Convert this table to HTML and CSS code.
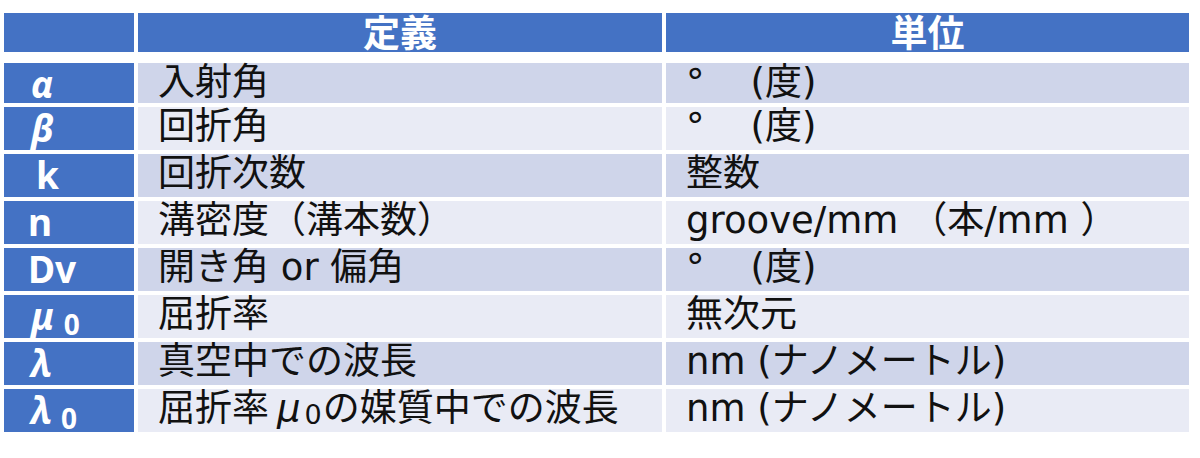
FILE: index.html
```html
<!DOCTYPE html>
<html lang="ja">
<head>
<meta charset="utf-8">
<link rel="stylesheet" href="styles.css">
</head>
<body>
<div class="table">
  <div class="head">
    <div class="hcell"></div>
    <div class="hcell">定義</div>
    <div class="hcell">単位</div>
  </div>
  <div class="rows">
    <div class="row odd">
      <div class="sym"><i>α</i></div>
      <div class="cell">入射角</div>
      <div class="cell">°<span class="deg-gap"></span>(度)</div>
    </div>
    <div class="row even">
      <div class="sym"><i>β</i></div>
      <div class="cell">回折角</div>
      <div class="cell">°<span class="deg-gap"></span>(度)</div>
    </div>
    <div class="row odd">
      <div class="sym sym-k">k</div>
      <div class="cell">回折次数</div>
      <div class="cell">整数</div>
    </div>
    <div class="row even">
      <div class="sym">n</div>
      <div class="cell">溝密度（溝本数）</div>
      <div class="cell">groove/mm （本/mm ）</div>
    </div>
    <div class="row odd">
      <div class="sym">Dv</div>
      <div class="cell">開き角 or 偏角</div>
      <div class="cell">°<span class="deg-gap"></span>(度)</div>
    </div>
    <div class="row even">
      <div class="sym"><i>μ</i><span class="symsub">0</span></div>
      <div class="cell">屈折率</div>
      <div class="cell">無次元</div>
    </div>
    <div class="row odd">
      <div class="sym"><i>λ</i></div>
      <div class="cell">真空中での波長</div>
      <div class="cell">nm (ナノメートル)</div>
    </div>
    <div class="row even">
      <div class="sym"><i>λ</i><span class="symsub">0</span></div>
      <div class="cell">屈折率<i class="mu">μ</i><span class="sub">0</span>の媒質中での波長</div>
      <div class="cell">nm (ナノメートル)</div>
    </div>
  </div>
</div>
</body>
</html>
```

FILE: styles.css
```css
html, body {
  margin: 0;
  padding: 0;
  background: #ffffff;
}

body {
  width: 1200px;
  height: 458px;
  overflow: hidden;
  font-family: "DejaVu Sans", "Noto Sans CJK JP", sans-serif;
  color: #111111;
}

.table {
  padding: 13px 0 0 4px;
}

.head,
.row {
  display: grid;
  grid-template-columns: 130px 524px 523px;
  column-gap: 4px;
}

.head {
  height: 39px;
  margin-bottom: 11px;
}

.hcell {
  background: #4472c4;
  color: #ffffff;
  font-family: "Noto Sans CJK JP", sans-serif;
  font-size: 37px;
  font-weight: 700;
  line-height: 36px;
  text-align: center;
}

.rows {
  display: flex;
  flex-direction: column;
  gap: 4px;
}

.row {
  height: 43px;
}

.row:first-child {
  height: 40px;
}

.sym {
  background: #4472c4;
  color: #ffffff;
  font-family: "Noto Sans", "Noto Sans CJK JP", sans-serif;
  font-weight: 700;
  font-size: 37px;
  line-height: 38px;
  padding-top: 2px;
  padding-left: 24px;
  white-space: nowrap;
}

.sym-k {
  padding-left: 32px;
}

.sym i {
  font-style: italic;
  padding-left: 3px;
}

.symsub {
  font-size: 28px;
  margin-left: 9px;
  position: relative;
  top: 5px;
}

.cell {
  font-size: 37px;
  line-height: 40px;
  padding-left: 20px;
  white-space: nowrap;
}

.deg-gap {
  display: inline-block;
  width: 46px;
}

.odd .cell {
  background: #cfd5ea;
}

.even .cell {
  background: #e9ebf5;
}

.mu {
  font-style: italic;
  margin-left: 8px;
}

.sub {
  font-size: 27px;
  margin-left: 4px;
  margin-right: 1px;
  position: relative;
  top: 3px;
}
```
